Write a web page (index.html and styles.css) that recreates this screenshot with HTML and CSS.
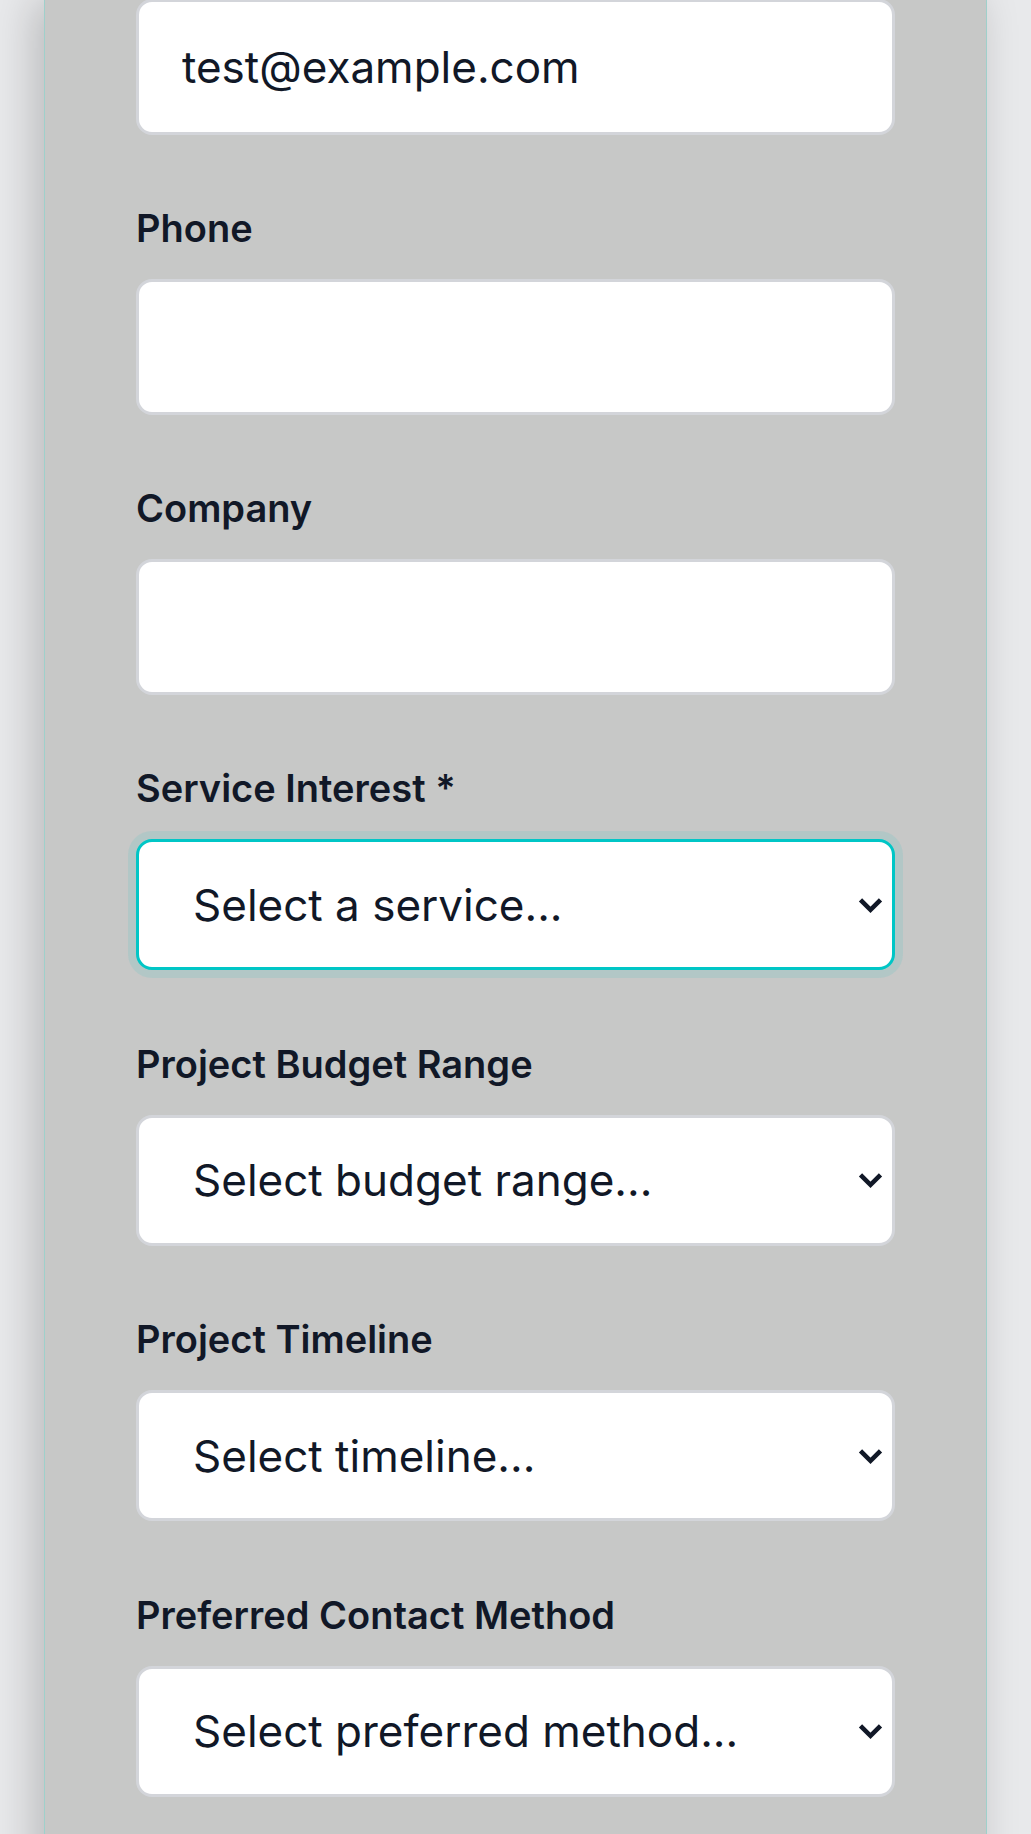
FILE: index.html
```html
<!DOCTYPE html>
<html lang="en">
<head>
<meta charset="utf-8">
<title>Contact form</title>
<link rel="stylesheet" href="styles.css">
</head>
<body>
<main class="panel">
  <form class="form">
    <div class="field">
      <input class="control" type="email" value="test@example.com" aria-label="Email">
    </div>
    <div class="field">
      <label class="label" for="phone">Phone</label>
      <input class="control" id="phone" type="tel">
    </div>
    <div class="field">
      <label class="label" for="company">Company</label>
      <input class="control" id="company" type="text">
    </div>
    <div class="field">
      <label class="label" for="service">Service Interest *</label>
      <div class="select-wrap">
        <select class="control select is-focused" id="service">
          <option>Select a service...</option>
        </select>
        <svg class="chevron" viewBox="0 0 25 17" width="25" height="17" aria-hidden="true"><polyline points="2.5,2.8 12.5,12.8 22.5,2.8" fill="none" stroke="#111827" stroke-width="4.6" stroke-linecap="butt" stroke-linejoin="miter"/></svg>
      </div>
    </div>
    <div class="field">
      <label class="label" for="budget">Project Budget Range</label>
      <div class="select-wrap">
        <select class="control select" id="budget">
          <option>Select budget range...</option>
        </select>
        <svg class="chevron" viewBox="0 0 25 17" width="25" height="17" aria-hidden="true"><polyline points="2.5,2.8 12.5,12.8 22.5,2.8" fill="none" stroke="#111827" stroke-width="4.6" stroke-linecap="butt" stroke-linejoin="miter"/></svg>
      </div>
    </div>
    <div class="field">
      <label class="label" for="timeline">Project Timeline</label>
      <div class="select-wrap">
        <select class="control select" id="timeline">
          <option>Select timeline...</option>
        </select>
        <svg class="chevron" viewBox="0 0 25 17" width="25" height="17" aria-hidden="true"><polyline points="2.5,2.8 12.5,12.8 22.5,2.8" fill="none" stroke="#111827" stroke-width="4.6" stroke-linecap="butt" stroke-linejoin="miter"/></svg>
      </div>
    </div>
    <div class="field">
      <label class="label" for="method">Preferred Contact Method</label>
      <div class="select-wrap">
        <select class="control select" id="method">
          <option>Select preferred method...</option>
        </select>
        <svg class="chevron" viewBox="0 0 25 17" width="25" height="17" aria-hidden="true"><polyline points="2.5,2.8 12.5,12.8 22.5,2.8" fill="none" stroke="#111827" stroke-width="4.6" stroke-linecap="butt" stroke-linejoin="miter"/></svg>
      </div>
    </div>
  </form>
</main>
</body>
</html>
```
FILE: styles.css
```css
html, body {
  margin: 0;
  padding: 0;
}
body {
  background: #e8e9eb;
  font-family: Inter, "Noto Sans", "Liberation Sans", sans-serif;
  color: #111827;
  overflow: hidden;
  height: 1834px;
}
.panel {
  box-sizing: border-box;
  width: 943px;
  margin: -1px auto 0;
  min-height: 1900px;
  padding: 0 91px 80px;
  background: #c7c8c7;
  border-left: 1px solid #9fd0cb;
  border-right: 1px solid #9fd0cb;
  box-shadow: -10px 0 40px rgba(0, 0, 0, 0.2);
}
.form {
  display: flex;
  flex-direction: column;
  gap: 66.5px;
}
.field {
  display: flex;
  flex-direction: column;
}
.label {
  display: block;
  font-size: 38px;
  font-weight: 600;
  line-height: 54px;
  margin-bottom: 24px;
  color: #111827;
}
.control {
  box-sizing: border-box;
  width: 100%;
  height: 135.5px;
  margin: 0;
  padding: 0 43px;
  border: 3px solid #d3d5da;
  border-radius: 16px;
  background: #ffffff;
  font-family: Inter, "Noto Sans", "Liberation Sans", sans-serif;
  font-size: 44px;
  color: #111827;
  outline: none;
}
.select-wrap {
  position: relative;
}
.select {
  display: block;
  height: 131px;
  padding: 0 60px 0 54px;
  -webkit-appearance: none;
  appearance: none;
}
.chevron {
  position: absolute;
  right: 12px;
  top: 50%;
  margin-top: -8px;
  pointer-events: none;
}
.is-focused {
  border-color: #00c6c6;
  box-shadow: 0 0 0 8px rgba(0, 200, 200, 0.1);
}
```
